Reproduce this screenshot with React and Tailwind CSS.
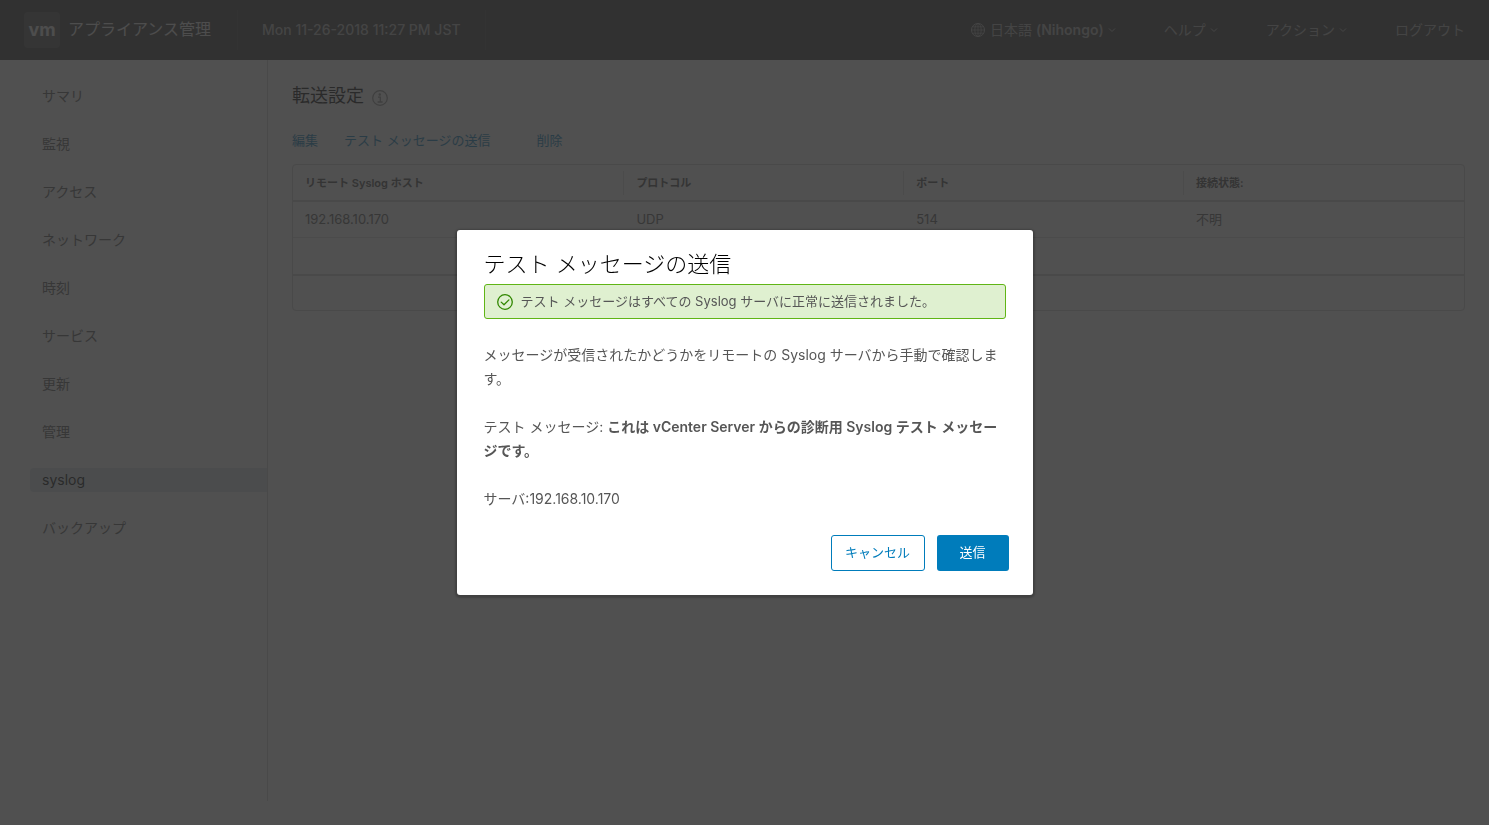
import React from "react";

const navItems = ["サマリ", "監視", "アクセス", "ネットワーク", "時刻", "サービス", "更新", "管理", "syslog", "バックアップ"];

const columns = ["リモート Syslog ホスト", "プロトコル", "ポート", "接続状態:"];

function GlobeIcon() {
  return (
    <svg className="size-4" viewBox="0 0 16 16" fill="none" stroke="currentColor" aria-hidden="true">
      <circle cx="8" cy="8" r="6.5" />
      <ellipse cx="8" cy="8" rx="3.2" ry="6.5" strokeWidth="0.8" />
      <path d="M8 1.5v13M1.5 8h13M2.6 4.8h10.8M2.6 11.2h10.8" strokeWidth="0.7" />
    </svg>
  );
}

function Caret() {
  return (
    <svg className="size-2" viewBox="0 0 8 8" fill="none" stroke="currentColor" aria-hidden="true">
      <path d="M1 2.5l3 3 3-3" />
    </svg>
  );
}

function InfoIcon() {
  return (
    <svg className="size-4" viewBox="0 0 16 16" fill="none" stroke="currentColor" aria-hidden="true">
      <circle cx="8" cy="8" r="7.3" strokeWidth="1.2" />
      <circle cx="7.8" cy="4.5" r="1.2" fill="currentColor" stroke="none" />
      <path d="M6 7.2h2.3v4.6M5.6 12h5" strokeWidth="1.3" />
    </svg>
  );
}

function SuccessIcon() {
  return (
    <svg className="size-4 shrink-0" viewBox="0 0 16 16" fill="none" stroke="currentColor" aria-hidden="true">
      <circle cx="8" cy="8" r="7.3" strokeWidth="1.3" />
      <path d="M4.2 8.1l2.8 2.7 4.9-4.9" strokeWidth="1.3" strokeLinecap="round" strokeLinejoin="round" />
    </svg>
  );
}

function Header() {
  return (
    <header className="flex h-15 items-center bg-[#313131] px-6 text-sm text-[#b0b0b0]">
      <a href="#home" className="flex items-center gap-2">
        <span className="flex size-9 items-center justify-center rounded-sm bg-[#4c4c4c] text-lg font-bold text-[#e6e6e6]">vm</span>
        <span className="pb-0.5 text-base text-[#e6e6e6]">アプライアンス管理</span>
      </a>
      <span className="ml-[26px] h-10 w-px bg-[#404040]" />
      <time className="px-6 font-medium">Mon 11-26-2018 11:27 PM JST</time>
      <span className="h-10 w-px bg-[#404040]" />
      <nav className="ml-auto flex items-center gap-12">
        <button type="button" className="flex items-center gap-1">
          <GlobeIcon />
          <span>日本語 <span className="font-semibold">(Nihongo)</span></span>
          <Caret />
        </button>
        <button type="button" className="flex items-center gap-1">ヘルプ<Caret /></button>
        <button type="button" className="flex items-center gap-1">アクション<Caret /></button>
        <a href="#logout">ログアウト</a>
      </nav>
    </header>
  );
}

function Sidebar() {
  return (
    <nav className="w-67 shrink-0 border-r border-[#ccc] pt-6 pl-[30px]">
      <ul className="flex flex-col gap-6">
        {navItems.map((item) => (
          <li key={item}>
            <a
              href={"#" + item}
              className={
                item === "syslog"
                  ? "block rounded-l-sm bg-[#d9e4ea] pl-3 text-sm leading-6 text-black"
                  : "block pl-3 text-sm leading-6 text-[#565656]"
              }
            >
              {item}
            </a>
          </li>
        ))}
      </ul>
    </nav>
  );
}

function HostTable() {
  return (
    <div className="mt-3 rounded-sm border border-[#ccc]">
      <table className="w-full table-fixed border-separate border-spacing-0 text-left text-[13px] text-[#565656]">
        <colgroup>
          <col className="w-[28.3%]" />
          <col className="w-[23.9%]" />
          <col className="w-[23.9%]" />
          <col />
        </colgroup>
        <thead>
          <tr>
            {columns.map((name, i) => (
              <th key={name} className="h-[37px] border-b-2 border-[#ccc] p-0 text-[11px] font-semibold text-[#454545]">
                <div className={i < 3 ? "border-r border-[#dedede] pl-3 leading-6" : "pl-3 leading-6"}>{name}</div>
              </th>
            ))}
          </tr>
        </thead>
        <tbody>
          <tr>
            {["192.168.10.170", "UDP", "514", "不明"].map((value) => (
              <td key={value} className="h-9 border-b border-[#ddd] py-0 pr-0 pl-3">{value}</td>
            ))}
          </tr>
          <tr>
            <td colSpan={4} className="h-[38px] border-b-2 border-[#ccc] p-0" />
          </tr>
        </tbody>
        <tfoot>
          <tr>
            <td colSpan={4} className="h-[34px] p-0" />
          </tr>
        </tfoot>
      </table>
    </div>
  );
}

function Dialog() {
  return (
    <div className="fixed inset-0 flex items-center justify-center bg-[#313131]/85">
      <section
        role="dialog"
        aria-modal="true"
        aria-labelledby="dialog-title"
        className="w-xl rounded-[3px] bg-white px-6 pt-[22px] pb-6 text-[#565656] shadow-[0_1px_2px_2px_rgba(0,0,0,0.2)]"
      >
        <div className="px-[3px]">
          <h2 id="dialog-title" className="mb-2 text-[22px] leading-6 font-light text-black">テスト メッセージの送信</h2>
          <div role="status" className="flex items-center gap-2 rounded-[3px] border border-[#60b515] bg-[#dff0d0] px-3 py-[5px] text-[13px] leading-[23px]">
            <span className="text-[#318700]"><SuccessIcon /></span>
            <span>テスト メッセージはすべての Syslog サーバに正常に送信されました。</span>
          </div>
        </div>
        <div className="mt-6 flex flex-col gap-6 pl-[3px] text-sm leading-6">
          <p>メッセージが受信されたかどうかをリモートの Syslog サーバから手動で確認します。</p>
          <p>テスト メッセージ: <strong className="font-semibold">これは vCenter Server からの診断用 Syslog テスト メッセージです。</strong></p>
          <p>サーバ:192.168.10.170</p>
        </div>
        <div className="mt-6 flex justify-end gap-3 text-[13px]">
          <button type="button" className="h-9 w-[94px] rounded-[3px] border border-[#007cbb] text-[#007cbb]">キャンセル</button>
          <button type="button" className="h-9 w-18 rounded-[3px] bg-[#007cbb] text-white">送信</button>
        </div>
      </section>
    </div>
  );
}

export default function App() {
  return (
    <div className="flex min-h-screen flex-col bg-[#fafafa] font-['Inter','Noto_Sans_CJK_JP',sans-serif]" lang="ja">
      <Header />
      <div className="flex grow pb-6">
        <Sidebar />
        <main className="min-w-0 grow px-6 pt-6">
          <div className="flex items-center gap-2">
            <h1 className="text-lg leading-6 text-black">転送設定</h1>
            <button type="button" aria-label="情報" className="mt-1 text-[#8c8c8c]"><InfoIcon /></button>
          </div>
          <div className="mt-5 flex text-[13px] leading-6 text-[#007cbb]">
            <button type="button" className="mr-[26px]">編集</button>
            <button type="button" className="mr-[46px]">テスト メッセージの送信</button>
            <button type="button">削除</button>
          </div>
          <HostTable />
        </main>
      </div>
      <Dialog />
    </div>
  );
}
